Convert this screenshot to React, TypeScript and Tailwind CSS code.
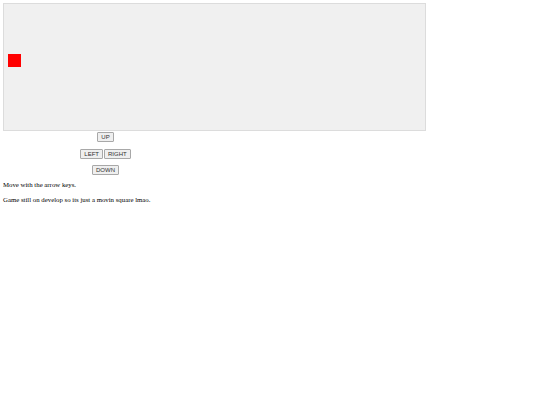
import React, { useEffect, useState } from "react";

const btn =
  "h-[10px] px-[3px] leading-none text-[6px] text-[#333] bg-[#efefef] border border-[#a8a8a8] rounded-[1px] font-['Liberation_Sans',Arial,sans-serif]";

export default function App() {
  const [pos, setPos] = useState({ x: 4, y: 50 });

  const move = (dx: number, dy: number) =>
    setPos((p) => ({
      x: Math.max(0, Math.min(408, p.x + dx)),
      y: Math.max(0, Math.min(113, p.y + dy)),
    }));

  useEffect(() => {
    const onKey = (e: KeyboardEvent) => {
      if (e.key === "ArrowUp") move(0, -5);
      if (e.key === "ArrowDown") move(0, 5);
      if (e.key === "ArrowLeft") move(-5, 0);
      if (e.key === "ArrowRight") move(5, 0);
    };
    window.addEventListener("keydown", onKey);
    return () => window.removeEventListener("keydown", onKey);
  }, []);

  return (
    <div className="w-[540px] h-[405px] bg-white pl-[3px] pt-[3px] leading-none font-['Liberation_Serif','Times_New_Roman',serif] text-black">
      <div className="relative w-[423px] h-[128px] bg-[#f0f0f0] border border-[#dcdcdc]">
        <div
          className="absolute w-[13px] h-[13px] bg-[#ff0000]"
          style={{ left: pos.x, top: pos.y }}
        />
      </div>
      <div className="w-[205px] flex flex-col items-center">
        <div className="h-[16px] pt-[1px] flex">
          <button className={btn} onClick={() => move(0, -5)}>UP</button>
        </div>
        <div className="h-[16px] pt-[2px] flex gap-[1px]">
          <button className={btn} onClick={() => move(-5, 0)}>LEFT</button>
          <button className={btn} onClick={() => move(5, 0)}>RIGHT</button>
        </div>
        <div className="h-[16px] pt-[2px] flex">
          <button className={btn} onClick={() => move(0, 5)}>DOWN</button>
        </div>
      </div>
      <p className="mt-[1px] text-[6.8px] leading-[9px]">Move with the arrow keys.</p>
      <p className="mt-[6px] text-[6.8px] leading-[9px]">Game still on develop so its just a movin square lmao.</p>
    </div>
  );
}
